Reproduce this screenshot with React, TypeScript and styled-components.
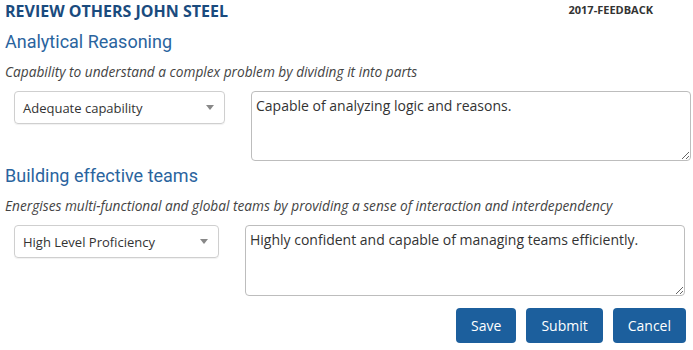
import React from 'react';
import styled, { createGlobalStyle } from 'styled-components';

const GlobalStyle = createGlobalStyle`
  body {
    margin: 0;
    background: #fff;
    font-family: 'Open Sans', 'Liberation Sans', sans-serif;
    color: #333;
  }
`;

const Page = styled.div`
  width: 693px;
  padding: 0 0 0 5px;
  box-sizing: border-box;
`;

const Header = styled.div`
  display: flex;
  justify-content: space-between;
  align-items: flex-start;
  padding-right: 40px;
  height: 27px;
`;

const Title = styled.h1`
  margin: 1px 0 0;
  font-size: 16px;
  line-height: 21px;
  font-weight: 700;
  color: #1a4b7e;
`;

const Tag = styled.span`
  margin-top: 2px;
  font-size: 11px;
  line-height: 15px;
  font-weight: 700;
  color: #333;
`;

const Section = styled.section`
  margin-bottom: 4px;
`;

const Heading = styled.h2`
  margin: 4px 0 0;
  font-family: Roboto, 'Liberation Sans', sans-serif;
  font-size: 18px;
  line-height: 22px;
  font-weight: 400;
  color: #2a649e;
`;

const Description = styled.p`
  margin: 10px 0 10px;
  font-size: 13.7px;
  line-height: 18px;
  font-style: italic;
  color: #444;
`;

const Row = styled.div<{ $gap: number }>`
  display: flex;
  align-items: flex-start;
  gap: ${(p) => p.$gap}px;
  padding-left: 9px;
`;

const Select = styled.div<{ $width: number }>`
  width: ${(p) => p.$width}px;
  height: 33px;
  box-sizing: border-box;
  border: 1px solid #cfcfcf;
  border-radius: 4px;
  box-shadow: 0 1px 1px rgba(0, 0, 0, 0.06);
  display: flex;
  align-items: center;
  justify-content: space-between;
  padding: 0 8px 0 8px;
  font-size: 13px;
  color: #333;
`;

const Caret = styled.span`
  width: 0;
  height: 0;
  border-left: 4px solid transparent;
  border-right: 4px solid transparent;
  border-top: 5px solid #888;
  margin-right: 2px;
`;

const Comment = styled.textarea<{ $width: number; $height: number }>`
  width: ${(p) => p.$width}px;
  height: ${(p) => p.$height}px;
  box-sizing: border-box;
  border: 1px solid #bdbdbd;
  border-radius: 4px;
  padding: 4px 4px;
  margin: 0;
  font-family: 'Open Sans', 'Liberation Sans', sans-serif;
  font-size: 14px;
  line-height: 20px;
  color: #333;
  outline: none;
`;

const Actions = styled.div`
  display: flex;
  justify-content: flex-end;
  gap: 10px;
  padding: 8px 7px 0 0;
`;

const Button = styled.button`
  height: 35px;
  padding: 0 15px;
  border: none;
  border-radius: 4px;
  background: #1c5f9d;
  color: #fff;
  font-family: 'Open Sans', 'Liberation Sans', sans-serif;
  font-size: 14px;
  cursor: pointer;
`;

const sections = [
  {
    title: 'Analytical Reasoning',
    desc: 'Capability to understand a complex problem by dividing it into parts',
    level: 'Adequate capability',
    comment: 'Capable of analyzing logic and reasons.',
    selectWidth: 211,
    gap: 26,
    areaWidth: 440,
    areaHeight: 70,
  },
  {
    title: 'Building effective teams',
    desc: 'Energises multi-functional and global teams by providing a sense of interaction and interdependency',
    level: 'High Level Proficiency',
    comment: 'Highly confident and capable of managing teams efficiently.',
    selectWidth: 205,
    gap: 26,
    areaWidth: 440,
    areaHeight: 71,
  },
];

export default function App() {
  return (
    <Page>
      <GlobalStyle />
      <Header>
        <Title>REVIEW OTHERS JOHN STEEL</Title>
        <Tag>2017-FEEDBACK</Tag>
      </Header>
      {sections.map((s) => (
        <Section key={s.title}>
          <Heading>{s.title}</Heading>
          <Description>{s.desc}</Description>
          <Row $gap={s.gap}>
            <Select $width={s.selectWidth}>
              {s.level}
              <Caret />
            </Select>
            <Comment
              $width={s.areaWidth}
              $height={s.areaHeight}
              defaultValue={s.comment}
            />
          </Row>
        </Section>
      ))}
      <Actions>
        <Button>Save</Button>
        <Button>Submit</Button>
        <Button>Cancel</Button>
      </Actions>
    </Page>
  );
}
